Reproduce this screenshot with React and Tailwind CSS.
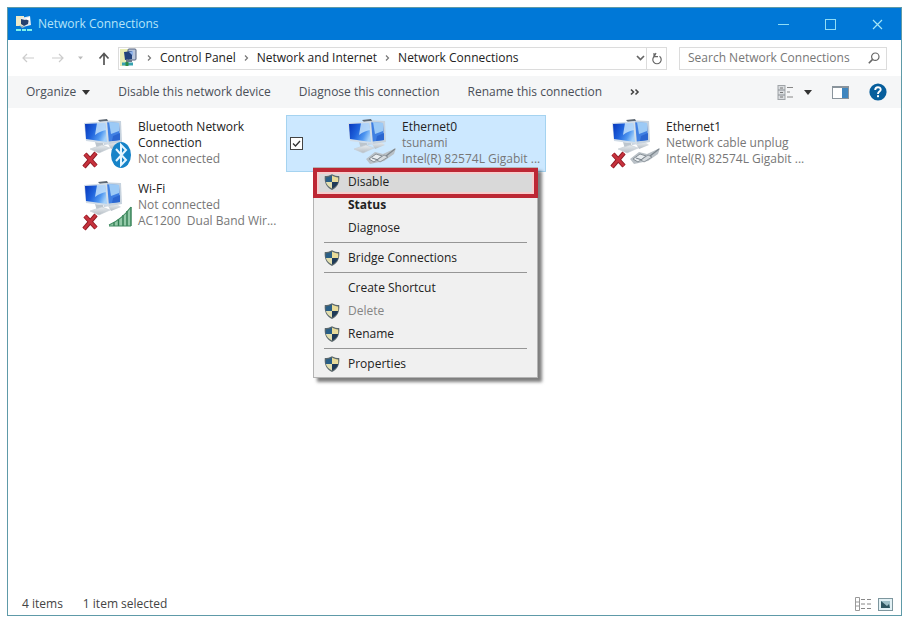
import { useState } from "react";

const conexiones = [
  { id: 1, lineas: ["Bluetooth Network", "Connection"], detalle: ["Not connected"], tipo: "bluetooth", cortada: true },
  { id: 2, lineas: ["Ethernet0"], detalle: ["tsunami", "Intel(R) 82574L Gigabit ..."], tipo: "cable", menu: true },
  { id: 3, lineas: ["Ethernet1"], detalle: ["Network cable unplug", "Intel(R) 82574L Gigabit ..."], tipo: "cable", cortada: true },
  { id: 4, lineas: ["Wi-Fi"], detalle: ["Not connected", "AC1200  Dual Band Wir..."], tipo: "wifi", cortada: true },
];

// Cada grupo va separado por una línea
const gruposMenu = [
  [
    { texto: "Disable", escudo: true, activo: true },
    { texto: "Status", negrita: true },
    { texto: "Diagnose" },
  ],
  [{ texto: "Bridge Connections", escudo: true }],
  [
    { texto: "Create Shortcut" },
    { texto: "Delete", escudo: true, apagado: true },
    { texto: "Rename", escudo: true },
  ],
  [{ texto: "Properties", escudo: true }],
];

function IconoVentana() {
  return (
    <svg width="16" height="18" viewBox="0 0 16 18">
      <rect x="0" y="1" width="8" height="10" fill="#ece9c8" />
      <path d="M5 3 L14 1 L15 10 L7 12 Z" fill="#e6edf2" />
      <path d="M5 4 L9 5 L13 3 L12 9 L8 11 L5 9 Z" fill="#24406e" />
      <path d="M9 4 L14 2 L14 6 Z" fill="#fff" />
      <path d="M3 10 L9 12 L6 13 Z" fill="#9db4bd" />
      <path d="M0 15 H5 M6 15 H10 M11 15 H16" stroke="#7df0ec" strokeWidth="2" />
    </svg>
  );
}

function IconoRuta() {
  return (
    <svg width="20" height="20" viewBox="0 0 20 20">
      <rect x="1" y="1" width="8" height="17" fill="#e9edb4" />
      <rect x="9" y="1" width="8" height="11" rx="1" fill="#b9c6dc" stroke="#55627e" />
      <path d="M5 4 L13 3 L13 11 L6 12 Z" fill="#23427c" />
      <path d="M10 4 L14 3 L14 8 Z" fill="#8fb2e8" />
      <rect x="7" y="12" width="6" height="2" fill="#6e7d8c" />
      <path d="M3 16 H14" stroke="#37a3b0" strokeWidth="3" />
      <path d="M8 14 V18" stroke="#2d8a4a" strokeWidth="3" />
    </svg>
  );
}

function Escudo() {
  return (
    <svg width="16" height="16" viewBox="0 0 16 16">
      <path d="M8 0.2 C10 1.6 13 2 15.2 2 C16 9 13.2 13.4 8 16 C2.8 13.4 0 9 0.8 2 C3 2 6 1.6 8 0.2 Z" fill="#5b686c" />
      <path d="M8 1.6 V8 H1.9 C1.7 6.5 1.7 5 1.9 3.4 C4 3.3 6.4 2.8 8 1.6 Z" fill="#2a5f86" />
      <path d="M8 1.6 V8 H14.1 C14.3 6.5 14.3 5 14.1 3.4 C12 3.3 9.6 2.8 8 1.6 Z" fill="#e9dc9a" />
      <path d="M8 8 V14.6 C4.8 12.9 2.6 10.8 1.9 8 Z" fill="#e3dfb0" />
      <path d="M8 8 V14.6 C11.2 12.9 13.4 10.8 14.1 8 Z" fill="#1f3a58" />
    </svg>
  );
}

function IconoConexion({ tipo, cortada }) {
  return (
    <svg width="52" height="54" viewBox="0 0 52 54" className="shrink-0">
      <defs>
        <linearGradient id="pantalla" x1="0" y1="0.2" x2="1" y2="0.6">
          <stop offset="0" stopColor="#0a3cc0" />
          <stop offset="0.4" stopColor="#1f63dc" />
          <stop offset="0.75" stopColor="#4f97f0" />
          <stop offset="1" stopColor="#a6d2fa" />
        </linearGradient>
        <linearGradient id="base" x1="0" y1="0" x2="0" y2="1">
          <stop offset="0" stopColor="#e9edf0" />
          <stop offset="1" stopColor="#b4bcc4" />
        </linearGradient>
      </defs>
      {/* Monitor de atrás */}
      <path d="M26 27 L35 25 L39 28 L29 32 Z" fill="url(#base)" />
      <path d="M17 3 L39 4 L40 25 L22 28 Z" fill="#c6d2de" />
      <path d="M19 5 L37 6 L38 23 L23 25 Z" fill="#3f7fe2" />
      <path d="M27 5 L37 6 L37 14 L29 17 Z" fill="#9ccaf6" />
      <path d="M31 19 L38 16 L38 23 L30 24 Z" fill="#2b66d0" />
      <path d="M16 3 L25 2 L26 4 L18 5 Z" fill="#5d6772" />
      {/* Monitor de adelante */}
      <path d="M13 25 L21 26 L22 31 L15 32 Z" fill="#bcc5cd" />
      <path d="M8 32 L20 28 L28 31 L17 36 Z" fill="url(#base)" stroke="#c4ccd3" strokeWidth="0.6" />
      <path d="M2 6 L25 4 L27 27 L4 24 Z" fill="#d2dde8" />
      <path d="M3 7 L23 6 L25 25 L4 22 Z" fill="url(#pantalla)" />
      <path d="M15 6 L23 6 L24 13 C20 14 17 15 13 18 Z" fill="#c4e2fb" opacity="0.85" />

      {tipo === "bluetooth" && (
        <g>
          <ellipse cx="39" cy="38" rx="10" ry="13" fill="#1683c8" />
          <path d="M34 32 L44 43 L39 48 V28 L44 33 L34 44" fill="none" stroke="#e6f6ff" strokeWidth="2" />
        </g>
      )}
      {tipo === "cable" && (
        <g>
          <path d="M20 42 L29 35 L37 37 L50 31 L48 37 L38 44 L24 47 Z" fill="#b9c0c6" />
          <path d="M23 42 L30 37 L36 39 L28 45 Z" fill="#e9edf0" stroke="#7f888f" strokeWidth="0.9" />
          <path d="M31 43 L38 38 L42 40 L34 45 Z" fill="#d5dade" stroke="#7f888f" strokeWidth="0.8" />
          <path d="M40 39 L49 32 M26 41 L32 43" stroke="#7d868d" strokeWidth="1.2" />
        </g>
      )}
      {tipo === "wifi" && (
        <g>
          <path d="M27 46 C34 43 43 36 49 28 V47 H27 Z" fill="#93c9a8" />
          <path d="M32 47 V43 M36.5 47 V40 M41 47 V36 M45 47 V32 M49 47 V28" stroke="#2f7d52" strokeWidth="1.4" />
          <path d="M27 46 C34 43 43 36 49 28 M27 47 H49" fill="none" stroke="#3f8a60" strokeWidth="1.2" />
        </g>
      )}
      {cortada && (
        <g>
          <path d="M3 37 L14 49 M14 36 L2 50" stroke="#8f1b25" strokeWidth="4.4" />
          <path d="M3 37 L14 49 M14 36 L2 50" stroke="#c7323d" strokeWidth="2.6" />
        </g>
      )}
    </svg>
  );
}

function MenuContextual() {
  return (
    <div
      role="menu"
      className="absolute left-[27px] top-[52px] z-10 w-[225px] border border-[#b4b4b4] bg-[#f0f0f0] p-0.5 shadow-[4px_4px_3px_rgba(0,0,0,0.5)]"
    >
      {gruposMenu.map((grupo, i) => (
        <div key={i}>
          {i > 0 && <hr className="mx-2 my-[3px] border-[#969696]" />}
          {grupo.map((op) => (
            <button
              key={op.texto}
              role="menuitem"
              disabled={op.apagado}
              className={`relative flex h-[23px] w-full items-center gap-2 px-2 text-left ${
                op.activo ? "bg-[#d9d9d9]" : ""
              } ${op.negrita ? "font-bold" : ""} ${op.apagado ? "text-[#858585]" : "text-[#222]"}`}
            >
              <span className="w-4">{op.escudo && <Escudo />}</span>
              {op.texto}
              {/* Marco rojo del paso a seguir */}
              {op.activo && (
                <span className="absolute -inset-x-[3px] -bottom-[5px] -top-0.5 border-4 border-[#bd2734] shadow-[inset_0_0_0_2px_#f6cdcd]" />
              )}
            </button>
          ))}
        </div>
      ))}
    </div>
  );
}

function Conexion({ con }) {
  const [marcada, setMarcada] = useState(true);

  return (
    <div
      className={`relative flex h-[57px] w-[260px] pl-[60px] ${
        con.menu ? "bg-[#cce8ff] outline outline-1 -outline-offset-1 outline-[#a5d3f0]" : ""
      }`}
    >
      {con.menu && (
        <label className="absolute left-1 top-[22px] flex size-[13px]">
          <input
            type="checkbox"
            aria-label="Ethernet0"
            checked={marcada}
            onChange={(e) => setMarcada(e.target.checked)}
            className="peer size-full appearance-none border border-[#444] bg-white"
          />
          <svg viewBox="0 0 13 13" className="pointer-events-none absolute inset-0 hidden peer-checked:block">
            <path d="M3 6.5 L5.5 9 L10 4" fill="none" stroke="#333" strokeWidth="1.3" />
          </svg>
        </label>
      )}
      <div className="pt-0.5">
        <IconoConexion tipo={con.tipo} cortada={con.cortada} />
      </div>
      <div className="whitespace-pre pl-1 pt-1 leading-4">
        {con.lineas.map((l) => (
          <p key={l} className="text-[#222]">{l}</p>
        ))}
        {con.detalle.map((l) => (
          <p key={l} className="text-[#777]">{l}</p>
        ))}
      </div>
      {con.menu && <MenuContextual />}
    </div>
  );
}

function Separador() {
  return (
    <svg width="5" height="8" viewBox="0 0 5 8">
      <path d="M1 1.5 L3.5 4 L1 6.5" fill="none" stroke="#777" strokeWidth="1.2" />
    </svg>
  );
}

function Triangulo() {
  return (
    <svg width="8" height="5" viewBox="0 0 8 5">
      <path d="M0 0 H8 L4 5 Z" fill="#333" />
    </svg>
  );
}

export default function App() {
  const [busqueda, setBusqueda] = useState("");

  return (
    <div className="flex min-h-screen flex-col bg-white pb-[2px] pl-[7px] pr-[2px] pt-[7px] font-['Open_Sans',sans-serif] text-[12px] text-[#222]">
      <div className="flex flex-1 flex-col border border-[#5e9aa8]">
        {/* Barra de título */}
        <header className="flex h-8 items-center bg-[#0078d7] pl-2 text-[#b5e4f8]">
          <IconoVentana />
          <h1 className="flex-1 pl-1.5">Network Connections</h1>
          <button aria-label="Minimize" className="flex h-8 w-[47px] items-center justify-center">
            <svg width="11" height="11" viewBox="0 0 11 11">
              <path d="M0 5.5 H11" stroke="#8fdcf5" />
            </svg>
          </button>
          <button aria-label="Maximize" className="flex h-8 w-[47px] items-center justify-center">
            <svg width="11" height="11" viewBox="0 0 11 11">
              <rect x="0.5" y="0.5" width="10" height="10" fill="none" stroke="#8fdcf5" />
            </svg>
          </button>
          <button aria-label="Close" className="flex h-8 w-[47px] items-center justify-center">
            <svg width="11" height="11" viewBox="0 0 11 11">
              <path d="M1 1 L10 10 M10 1 L1 10" stroke="#a5e6f7" strokeWidth="1.2" />
            </svg>
          </button>
        </header>

        {/* Navegación */}
        <div className="flex h-9 items-center pl-3 pr-3.5">
          <button aria-label="Back" className="flex w-8 pl-0.5">
            <svg width="12" height="10" viewBox="0 0 12 10">
              <path d="M12 5 H1 M5 1 L1 5 L5 9" fill="none" stroke="#ccc" strokeWidth="1.2" />
            </svg>
          </button>
          <button aria-label="Forward" className="flex w-[26px]">
            <svg width="12" height="10" viewBox="0 0 12 10">
              <path d="M0 5 H11 M7 1 L11 5 L7 9" fill="none" stroke="#ccc" strokeWidth="1.2" />
            </svg>
          </button>
          <button aria-label="Recent" className="flex w-5">
            <svg width="5" height="4" viewBox="0 0 5 4">
              <path d="M0 0.5 H5 L2.5 3.5 Z" fill="#bbb" />
            </svg>
          </button>
          <button aria-label="Up" className="flex w-5">
            <svg width="12" height="13" viewBox="0 0 12 13">
              <path d="M6 13 V1.5 M1.5 6.5 L6 1.5 L10.5 6.5" fill="none" stroke="#555" strokeWidth="1.7" />
            </svg>
          </button>
          <div className="flex h-[23px] flex-1 border border-[#dcdcdc]">
            <nav className="flex flex-1 items-center gap-2">
              <IconoRuta />
              <Separador />
              <a href="#panel">Control Panel</a>
              <Separador />
              <a href="#red">Network and Internet</a>
              <Separador />
              <a href="#conexiones">Network Connections</a>
            </nav>
            <button aria-label="Previous locations" className="flex w-3 items-center justify-center">
              <svg width="9" height="6" viewBox="0 0 9 6">
                <path d="M1 1 L4.5 4.5 L8 1" fill="none" stroke="#666" strokeWidth="1.7" />
              </svg>
            </button>
            <button aria-label="Refresh" className="flex w-5 items-center justify-center border-l border-[#dcdcdc]">
              <svg width="12" height="13" viewBox="0 0 12 13">
                <path d="M3.5 4.2 A4.2 4.2 0 1 0 8.5 4.2" fill="none" stroke="#666" strokeWidth="1.2" />
                <path d="M3 1 V4.7 H7 M5 1 L3.5 4" fill="none" stroke="#666" strokeWidth="1.2" />
              </svg>
            </button>
          </div>
          <div className="ml-3 flex h-[23px] w-[208px] items-center border border-[#dcdcdc] pl-2 pr-1.5">
            <input
              type="text"
              aria-label="Search Network Connections"
              placeholder="Search Network Connections"
              value={busqueda}
              onChange={(e) => setBusqueda(e.target.value)}
              className="min-w-0 flex-1 bg-transparent outline-none placeholder:text-[#777]"
            />
            <svg width="12" height="12" viewBox="0 0 12 12" className="shrink-0">
              <circle cx="7.3" cy="4.7" r="3.7" fill="none" stroke="#666" strokeWidth="1.2" />
              <path d="M4.6 7.4 L0.8 11.2" stroke="#666" strokeWidth="1.6" />
            </svg>
          </div>
        </div>

        {/* Barra de comandos */}
        <div className="flex h-8 items-center gap-7 bg-[#f5f6f7] pl-[18px] pr-3.5 text-[#4a4f58]">
          <button className="flex items-center gap-1.5">
            Organize <Triangulo />
          </button>
          <button>Disable this network device</button>
          <button>Diagnose this connection</button>
          <button>Rename this connection</button>
          <button aria-label="More commands">
            <svg width="10" height="8" viewBox="0 0 10 8">
              <path d="M1 1.5 L3.5 4 L1 6.5 M5.5 1.5 L8 4 L5.5 6.5" fill="none" stroke="#444" strokeWidth="1.6" />
            </svg>
          </button>
          <div className="ml-auto flex items-center gap-5">
            <button aria-label="Change view" className="flex items-center gap-2.5">
              <svg width="17" height="15" viewBox="0 0 17 15">
                <rect x="1" y="0.5" width="7" height="14" fill="#dadde0" stroke="#a0a4a8" />
                <path d="M1 5 H8 M1 10 H8" stroke="#8b9095" />
                <path d="M3 3 H6 M3 7.5 H6 M3 12 H6" stroke="#777" />
                <path d="M10 2.5 H16 M10 7 H13 M10 12 H16" stroke="#888" />
              </svg>
              <Triangulo />
            </button>
            <button aria-label="Preview pane">
              <svg width="17" height="13" viewBox="0 0 17 13">
                <rect x="0.5" y="0.5" width="16" height="12" fill="#fff" stroke="#8a949c" />
                <rect x="0.5" y="0" width="16" height="2" fill="#8a949c" />
                <rect x="10" y="2" width="6" height="10" fill="#3f86bf" />
              </svg>
            </button>
            <button aria-label="Help">
              <svg width="18" height="18" viewBox="0 0 18 18">
                <circle cx="9" cy="9" r="8.6" fill="#075e9c" />
                <path d="M6.2 7 C6.2 3.2 11.8 3.4 11.7 6.7 C11.6 8.6 9 8.7 9 10.9" fill="none" stroke="#fff" strokeWidth="1.9" />
                <rect x="8" y="12.2" width="2" height="2" fill="#fff" />
              </svg>
            </button>
          </div>
        </div>

        {/* Conexiones */}
        <main className="flex flex-1 flex-wrap content-start gap-x-1 gap-y-[5px] pl-3.5 pt-[7px]">
          {conexiones.map((con) => (
            <Conexion key={con.id} con={con} />
          ))}
        </main>

        {/* Barra de estado */}
        <footer className="flex h-[22px] items-center gap-5 pl-3.5 pr-2 text-[#444]">
          <span>4 items</span>
          <span>1 item selected</span>
          <div className="ml-auto flex items-center gap-1.5">
            <button aria-label="Details view">
              <svg width="18" height="14" viewBox="0 0 18 14">
                <path d="M1.5 0.5 H5.5 V13.5 H1.5 Z M1.5 5 H5.5 M1.5 9 H5.5" fill="none" stroke="#999" />
                <path d="M7 2.5 H11 M13 2.5 H17 M7 7 H11 M13 7 H17 M7 11.5 H11 M13 11.5 H17" stroke="#888" />
              </svg>
            </button>
            <button aria-label="Tiles view">
              <svg width="15" height="13" viewBox="0 0 15 13">
                <rect x="0.5" y="0.5" width="14" height="12" fill="#e3f1f5" stroke="#7d969e" />
                <rect x="3" y="3" width="9" height="7" fill="#9fc0c8" />
                <path d="M3 3 L9 8 L11 6 L12 10 H3 Z" fill="#2f5661" />
              </svg>
            </button>
          </div>
        </footer>
      </div>
    </div>
  );
}
